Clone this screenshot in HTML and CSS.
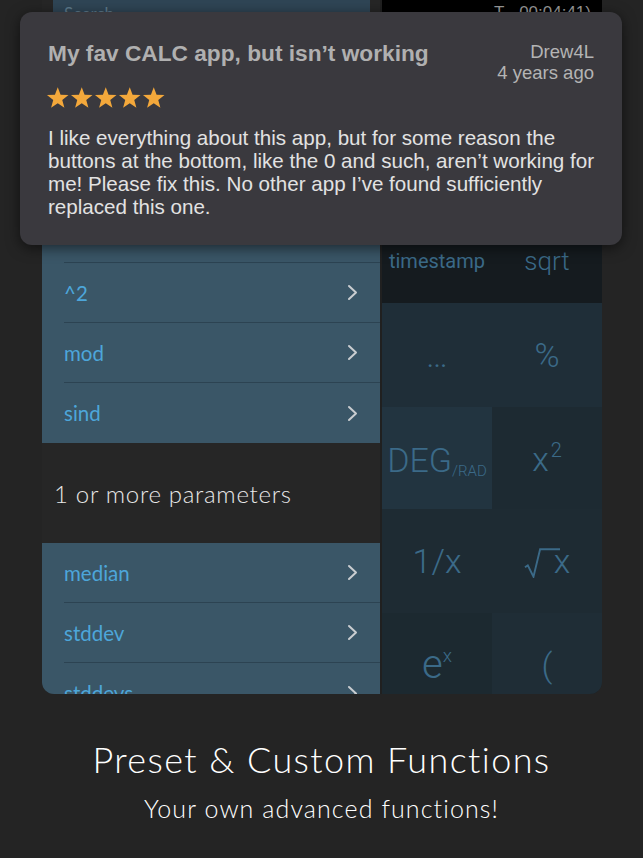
FILE: index.html
```html
<!DOCTYPE html>
<html lang="en">
<head>
<meta charset="utf-8">
<title>Preset &amp; Custom Functions</title>
<link rel="stylesheet" href="styles.css">
</head>
<body>
<div class="stage">
  <div class="device">
    <div class="list-pane">
      <div class="searchbar"><div class="search-field">Search</div></div>
      <div class="group">
        <div class="row"><div class="row-inner"><span>abs</span><svg class="chev" viewBox="0 0 11 17"><polyline points="2,2 9,8.5 2,15"/></svg></div></div>
        <div class="row"><div class="row-inner"><span>cosd</span><svg class="chev" viewBox="0 0 11 17"><polyline points="2,2 9,8.5 2,15"/></svg></div></div>
        <div class="row"><div class="row-inner"><span>log2</span><svg class="chev" viewBox="0 0 11 17"><polyline points="2,2 9,8.5 2,15"/></svg></div></div>
        <div class="row"><div class="row-inner"><span>tand</span><svg class="chev" viewBox="0 0 11 17"><polyline points="2,2 9,8.5 2,15"/></svg></div></div>
        <div class="row"><div class="row-inner"><span>^2</span><svg class="chev" viewBox="0 0 11 17"><polyline points="2,2 9,8.5 2,15"/></svg></div></div>
        <div class="row"><div class="row-inner"><span>mod</span><svg class="chev" viewBox="0 0 11 17"><polyline points="2,2 9,8.5 2,15"/></svg></div></div>
        <div class="row"><div class="row-inner"><span>sind</span><svg class="chev" viewBox="0 0 11 17"><polyline points="2,2 9,8.5 2,15"/></svg></div></div>
      </div>
      <div class="section-header">1 or more parameters</div>
      <div class="group">
        <div class="row"><div class="row-inner"><span>median</span><svg class="chev" viewBox="0 0 11 17"><polyline points="2,2 9,8.5 2,15"/></svg></div></div>
        <div class="row"><div class="row-inner"><span>stddev</span><svg class="chev" viewBox="0 0 11 17"><polyline points="2,2 9,8.5 2,15"/></svg></div></div>
        <div class="row"><div class="row-inner"><span>stddevs</span><svg class="chev" viewBox="0 0 11 17"><polyline points="2,2 9,8.5 2,15"/></svg></div></div>
      </div>
    </div>
    <div class="calc-pane">
      <div class="display"><span class="timer">T - 00:04:41)</span></div>
      <div class="keys">
        <div class="key fn"><span class="k-small">timestamp</span></div>
        <div class="key fn"><span class="k-mid">sqrt</span></div>
        <div class="key k1"><span class="k-big">…</span></div>
        <div class="key k1"><span class="k-big">%</span></div>
        <div class="key k-deg"><span class="k-big">DEG</span><span class="sub">/RAD</span></div>
        <div class="key k2"><span class="k-big">x<sup class="sup">2</sup></span></div>
        <div class="key k3"><span class="k-big">1/x</span></div>
        <div class="key k3"><span class="k-big root"><svg class="radical" viewBox="0 0 38 32"><polyline points="1,21 4,19 10,31 17,2 38,2"/></svg>x</span></div>
        <div class="key k4"><span class="k-e">e<sup class="sup-x">x</sup></span></div>
        <div class="key k5"><span class="k-big">(</span></div>
      </div>
    </div>
  </div>

  <div class="review">
    <div class="review-head">
      <div class="review-main">
        <div class="review-title">My fav CALC app, but isn’t working</div>
        <div class="stars">
          <svg viewBox="0 0 24 23"><polygon points="12,1 14.9,8.6 23,8.9 16.6,14 18.8,21.9 12,17.4 5.2,21.9 7.4,14 1,8.9 9.1,8.6"/></svg>
          <svg viewBox="0 0 24 23"><polygon points="12,1 14.9,8.6 23,8.9 16.6,14 18.8,21.9 12,17.4 5.2,21.9 7.4,14 1,8.9 9.1,8.6"/></svg>
          <svg viewBox="0 0 24 23"><polygon points="12,1 14.9,8.6 23,8.9 16.6,14 18.8,21.9 12,17.4 5.2,21.9 7.4,14 1,8.9 9.1,8.6"/></svg>
          <svg viewBox="0 0 24 23"><polygon points="12,1 14.9,8.6 23,8.9 16.6,14 18.8,21.9 12,17.4 5.2,21.9 7.4,14 1,8.9 9.1,8.6"/></svg>
          <svg viewBox="0 0 24 23"><polygon points="12,1 14.9,8.6 23,8.9 16.6,14 18.8,21.9 12,17.4 5.2,21.9 7.4,14 1,8.9 9.1,8.6"/></svg>
        </div>
      </div>
      <div class="review-meta">
        <div>Drew4L</div>
        <div>4 years ago</div>
      </div>
    </div>
    <p class="review-body">I like everything about this app, but for some reason the buttons at the bottom, like the 0 and such, aren’t working for me! Please fix this. No other app I’ve found sufficiently replaced this one.</p>
  </div>

  <div class="caption">
    <h1 class="caption-title">Preset &amp; Custom Functions</h1>
    <p class="caption-sub">Your own advanced functions!</p>
  </div>
</div>
</body>
</html>
```

FILE: styles.css
```css
* { box-sizing: border-box; }

html, body {
  margin: 0;
  padding: 0;
  background: #242424;
}

.stage {
  position: relative;
  width: 643px;
  height: 858px;
  overflow: hidden;
}

/* ---------- device screen ---------- */
.device {
  margin-left: 42px;
  width: 560px;
  height: 694px;
  display: flex;
  gap: 2px;
  background: #202020;
  border-radius: 0 0 12px 12px;
  overflow: hidden;
}

.list-pane {
  width: 338px;
  flex: none;
  display: flex;
  flex-direction: column;
  background: #262626;
  font-family: "Lato", "Liberation Sans", sans-serif;
}

.list-pane > * { flex-shrink: 0; }

.searchbar {
  height: 23px;
  padding: 0 10px 0 11px;
  background: #262626;
}

.search-field {
  height: 100%;
  background: #2f4555;
  color: #5e7a8c;
  font-size: 17px;
  padding: 4px 0 0 11px;
  line-height: 20px;
}

.group {
  background: #3a5667;
}

.row {
  height: 60px;
  padding-left: 22px;
  display: flex;
}

.row-inner {
  flex: 1;
  display: flex;
  align-items: center;
  justify-content: space-between;
  padding-right: 22px;
  border-bottom: 1px solid #2c4352;
  color: #4da6da;
  font-size: 20.5px;
}

.row:last-child .row-inner {
  border-bottom: none;
}

.chev {
  width: 11px;
  height: 17px;
  fill: none;
  stroke: #c9cdd0;
  stroke-width: 2;
  stroke-linecap: round;
  stroke-linejoin: round;
}

.section-header {
  height: 100px;
  display: flex;
  align-items: center;
  padding-left: 12px;
  color: #e8e8e8;
  font-size: 24px;
  font-weight: 300;
  letter-spacing: 0.7px;
  background: #262626;
}

/* ---------- calculator ---------- */
.calc-pane {
  width: 220px;
  flex: none;
  display: flex;
  flex-direction: column;
  font-family: "Roboto", "Liberation Sans", sans-serif;
  font-weight: 300;
  color: #3b6a88;
}

.calc-pane > * { flex-shrink: 0; }

.display {
  height: 218px;
  background: #000;
  color: #9a9a9a;
  text-align: right;
  padding: 0 11px 0 0;
  font-family: "Liberation Sans", sans-serif;
  font-size: 17px;
  line-height: 20px;
}

.timer {
  display: block;
  margin-top: 3px;
}

.keys {
  display: grid;
  grid-template-columns: 110px 110px;
  grid-template-rows: 85px 104px 102px 104px 104px;
}

.key {
  display: flex;
  align-items: center;
  justify-content: center;
  line-height: 1;
}

.fn { background: #151b1f; }
.k1 { background: #1f2e38; }
.k-deg { background: #223440; }
.k2 { background: #1d2a32; }
.k3 { background: #1e2b33; }
.k4 { background: #1c2930; }
.k5 { background: #1f2d36; }

.k-small { font-size: 20px; font-weight: 400; }
.k-mid { font-size: 26px; }
.k-big { font-size: 34px; }
.k-e { font-size: 40px; }

.k-deg { padding-top: 4px; }
.sub {
  font-size: 15px;
  align-self: center;
  margin-top: 22px;
}

.sup {
  font-size: 20px;
  vertical-align: 14px;
  margin-left: 2px;
}

.sup-x {
  font-size: 19px;
  vertical-align: 16px;
}

.root {
  display: flex;
  align-items: flex-end;
}

.radical {
  width: 36px;
  height: 31px;
  fill: none;
  stroke: #3b6a88;
  stroke-width: 2;
  margin-right: -6px;
}

/* ---------- review card ---------- */
.review {
  position: absolute;
  left: 20px;
  top: 12px;
  width: 602px;
  height: 233px;
  background: #3a393e;
  border-radius: 12px;
  box-shadow: 0 3px 14px rgba(0, 0, 0, 0.55);
  padding: 28px 26px 0 28px;
  font-family: "Liberation Sans", Arial, sans-serif;
}

.review-head {
  display: flex;
  justify-content: space-between;
  align-items: flex-start;
}

.review-title {
  font-weight: 700;
  font-size: 22.7px;
  line-height: 26px;
  color: #b0b0b0;
}

.review-meta {
  text-align: right;
  color: #b4b4b4;
  font-size: 18.5px;
  line-height: 21px;
  margin-top: 1px;
  margin-right: 2px;
}

.stars {
  display: flex;
  gap: 0.5px;
  margin-top: 20px;
  margin-left: -2px;
  height: 23px;
}

.stars svg {
  width: 23.5px;
  height: 23px;
  fill: #f3a83b;
}

.review-body {
  margin: 17px 0 0 0;
  font-size: 20.6px;
  line-height: 23px;
  color: #e2e2e2;
}

/* ---------- caption ---------- */
.caption {
  text-align: center;
  color: #ffffff;
  font-family: "Lato", "Liberation Sans", sans-serif;
  font-weight: 300;
}

.caption-title {
  margin: 41px 0 0 0;
  font-size: 36px;
  font-weight: 300;
  letter-spacing: 1.4px;
  line-height: 48px;
}

.caption-sub {
  margin: 8px 0 0 0;
  font-size: 25px;
  letter-spacing: 1.1px;
  line-height: 34px;
}
```
